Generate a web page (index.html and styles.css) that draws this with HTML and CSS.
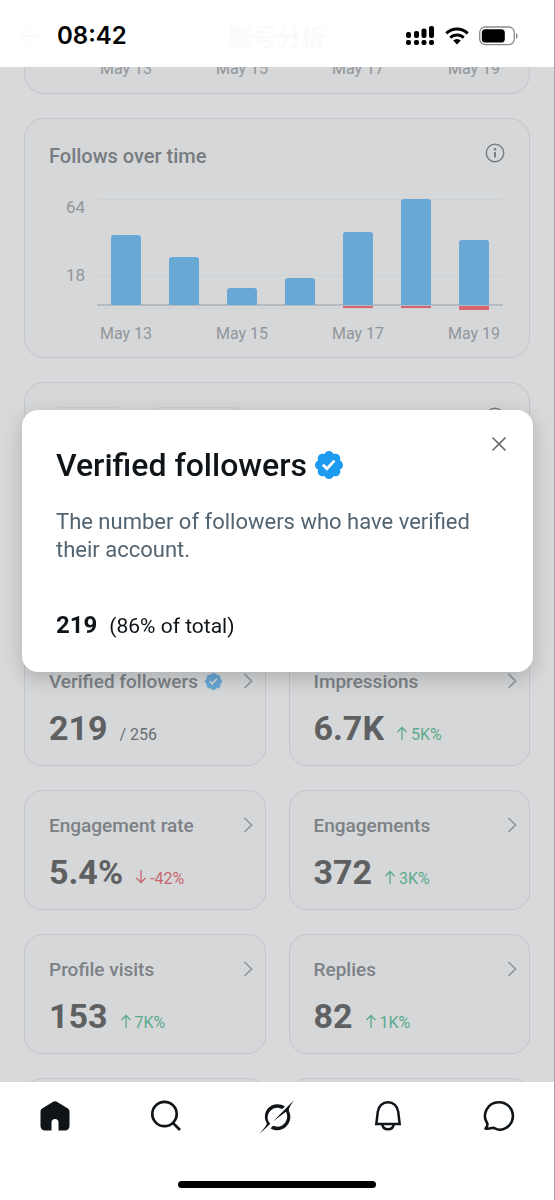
FILE: index.html
```html
<!DOCTYPE html>
<html lang="en">
<head>
<meta charset="utf-8">
<meta name="viewport" content="width=device-width, initial-scale=1">
<title>Account analytics</title>
<link rel="stylesheet" href="styles.css">
</head>
<body>
<svg class="defs" aria-hidden="true">
  <symbol id="verified" viewBox="1.75 1.75 20.5 20.5"><path fill="currentColor" d="M22.25 12c0-1.43-.88-2.67-2.19-3.34.46-1.39.2-2.9-.81-3.91s-2.52-1.27-3.91-.81c-.66-1.31-1.91-2.19-3.34-2.19s-2.67.88-3.33 2.19c-1.4-.46-2.91-.2-3.92.81s-1.26 2.52-.8 3.91c-1.31.67-2.2 1.91-2.2 3.34s.89 2.67 2.2 3.34c-.46 1.39-.21 2.9.8 3.91s2.52 1.26 3.91.81c.67 1.31 1.91 2.19 3.34 2.19s2.68-.88 3.34-2.19c1.39.45 2.9.2 3.91-.81s1.27-2.52.81-3.91c1.31-.67 2.19-1.91 2.19-3.34zm-11.71 4.2L6.8 12.46l1.41-1.42 2.26 2.26 4.8-5.23 1.47 1.36-6.2 6.77z"/></symbol>
  <symbol id="chevron" viewBox="0 0 10 16"><path d="M1.5 1l7 7-7 7" fill="none" stroke="currentColor" stroke-width="1.7"/></symbol>
  <symbol id="arrow-up" viewBox="0 0 12 14"><path d="M6 14V1.5M1.5 6L6 1.5 10.500 6" fill="none" stroke="currentColor" stroke-width="1.3"/></symbol>
  <symbol id="arrow-down" viewBox="0 0 12 14"><path d="M6 0v12.500M1.500 8L6 12.500 10.500 8" fill="none" stroke="currentColor" stroke-width="1.3"/></symbol>
  <symbol id="info" viewBox="0 0 20 20"><circle cx="10" cy="10" r="8.700" fill="none" stroke="currentColor" stroke-width="1.4"/><circle cx="10" cy="6.300" r="1.200" fill="currentColor"/><path d="M10 9v5.500" stroke="currentColor" stroke-width="1.900"/></symbol>
</svg>

<header class="topbar">
  <svg class="back" viewBox="0 0 20 18" aria-hidden="true"><path d="M20 9H2M9 2L2 9l7 7" fill="none" stroke="currentColor" stroke-width="2"/></svg>
  <time class="clock">08:42</time>
  <h1 class="page-title" lang="zh">账号分析</h1>
  <div class="indicators">
    <svg width="29" height="22" viewBox="0 0 29 22" aria-label="Signal">
      <g fill="#000"><rect x="0" y="7" width="5" height="6" rx="2"/><rect x="8" y="6" width="5" height="7" rx="2"/><rect x="15.500" y="3.500" width="5" height="9.500" rx="2"/><rect x="23" y="1" width="5" height="12" rx="2"/><rect x="0" y="15" width="5" height="5" rx="2"/><rect x="8" y="15" width="5" height="5" rx="2"/><rect x="15.500" y="15" width="5" height="5" rx="2"/><rect x="23" y="15" width="5" height="5" rx="2"/></g>
    </svg>
    <svg width="24" height="18" viewBox="0 0 24 18" aria-label="Wi-Fi">
      <g fill="none" stroke="#000" stroke-width="3"><path d="M1.300 6.400a15.300 15.300 0 0 1 21.400 0"/><path d="M5.300 10.800a9.600 9.600 0 0 1 13.400 0"/></g>
      <path d="M8.200 13.600a5.500 5.500 0 0 1 7.600 0L12 17.500z" fill="#000"/>
    </svg>
    <svg width="39" height="20" viewBox="0 0 39 20" aria-label="Battery">
      <rect x=".7" y="1" width="34.600" height="17.600" rx="5.500" fill="none" stroke="#8c8c8c" stroke-width="1.300"/><rect x="2.800" y="3.200" width="23" height="13.300" rx="3.500" fill="#000"/><path d="M37 7c2.200 1 2.200 4.800 0 5.800z" fill="#8c8c8c"/>
    </svg>
  </div>
</header>

<main class="feed">
  <section class="card previous">
    <div class="dates"><span>May 13</span><span></span><span>May 15</span><span></span><span>May 17</span><span></span><span>May 19</span></div>
  </section>

  <section class="card chart-card">
    <div class="card-head">
      <h2>Follows over time</h2>
      <button class="icon-button" aria-label="About follows over time"><svg class="info"><use href="#info"/></svg></button>
    </div>
    <div class="chart">
      <div class="scale"><span class="high">64</span><span>18</span></div>
      <div class="plot">
        <div class="bars">
          <i style="height:70px"></i><i style="height:48px"></i><i style="height:17px"></i><i style="height:27px"></i><i style="height:73px"></i><i style="height:106px"></i><i style="height:65px"></i>
        </div>
        <div class="losses">
          <i style="height:0"></i><i style="height:0"></i><i style="height:0"></i><i style="height:0"></i><i style="height:2px"></i><i style="height:2px"></i><i style="height:4px"></i>
        </div>
      </div>
    </div>
    <div class="dates"><span>May 13</span><span></span><span>May 15</span><span></span><span>May 17</span><span></span><span>May 19</span></div>
  </section>

  <section class="card range-card">
    <div class="chips"><span class="chip short"></span><span class="chip"></span></div>
    <button class="icon-button" aria-label="About this range"><svg class="info"><use href="#info"/></svg></button>
  </section>

  <div class="metrics">
    <button class="card metric">
      <span class="metric-head">Verified followers <svg class="badge"><use href="#verified"/></svg><svg class="chevron"><use href="#chevron"/></svg></span>
      <span class="metric-body"><strong>219</strong><span class="delta">/ 256</span></span>
    </button>
    <button class="card metric">
      <span class="metric-head">Impressions<svg class="chevron"><use href="#chevron"/></svg></span>
      <span class="metric-body"><strong>6.7K</strong><span class="delta up"><svg><use href="#arrow-up"/></svg>5K%</span></span>
    </button>
    <button class="card metric">
      <span class="metric-head">Engagement rate<svg class="chevron"><use href="#chevron"/></svg></span>
      <span class="metric-body"><strong>5.4%</strong><span class="delta down"><svg><use href="#arrow-down"/></svg>-42%</span></span>
    </button>
    <button class="card metric">
      <span class="metric-head">Engagements<svg class="chevron"><use href="#chevron"/></svg></span>
      <span class="metric-body"><strong>372</strong><span class="delta up"><svg><use href="#arrow-up"/></svg>3K%</span></span>
    </button>
    <button class="card metric">
      <span class="metric-head">Profile visits<svg class="chevron"><use href="#chevron"/></svg></span>
      <span class="metric-body"><strong>153</strong><span class="delta up"><svg><use href="#arrow-up"/></svg>7K%</span></span>
    </button>
    <button class="card metric">
      <span class="metric-head">Replies<svg class="chevron"><use href="#chevron"/></svg></span>
      <span class="metric-body"><strong>82</strong><span class="delta up"><svg><use href="#arrow-up"/></svg>1K%</span></span>
    </button>
    <div class="card metric"></div>
    <div class="card metric"></div>
  </div>
</main>

<footer class="dock">
  <nav class="tabs">
    <a href="#home" aria-label="Home"><svg viewBox="0 0 32 32"><path fill="#0f1419" d="M13.800 1.900a4 4 0 0 1 4.400 0l10.300 6.400c1.300.8 2 2 2 3.500V26a4.500 4.500 0 0 1-4.500 4.500h-6.500v-8a3.500 3.500 0 0 0-7 0v8H6A4.500 4.500 0 0 1 1.500 26V11.800c0-1.500.7-2.700 2-3.500z"/></svg></a>
    <a href="#search" aria-label="Search"><svg viewBox="0 0 32 32"><g fill="none" stroke="#0f1419" stroke-width="2.700"><circle cx="14.500" cy="14" r="12.200"/><path d="M23 23l7 7"/></g></svg></a>
    <a href="#grok" aria-label="Grok"><svg class="grok" viewBox="0 0 106 104"><path fill="#0f1419" d="M79 20C61 8 36 12 24 29c-9 14-8 29-1 41 2 6-8 15-21 33l32-30C22 60 24 42 36 31c10-9 24-10 34-3z"/><path fill="#0f1419" d="M106 1L43 65l39-29c8 16 2 34-12 42-10 5-20 4-28 1l-7 8c15 9 35 7 47-5 14-13 17-32 9-48-2-7 5-17 15-33z"/></svg></a>
    <a href="#notifications" aria-label="Notifications"><svg viewBox="0 0 32 32"><g fill="none" stroke="#0f1419" stroke-width="2.500"><path d="M4.300 24l1.500-12.400C6.400 6 10.700 2.300 16 2.300S25.600 6 26.200 11.600L27.700 24z"/><path d="M10.300 24.500c.9 6.400 10.500 6.400 11.400 0"/></g></svg></a>
    <a href="#messages" aria-label="Messages"><svg viewBox="0 0 32 32"><path fill="none" stroke="#0f1419" stroke-width="2.600" stroke-linejoin="round" d="M16 2.200A13.700 13.700 0 1 1 16.300 29.700c-2.500 0-4.200-1.400-5.800-2-1.700.1-4.300 1.700-8 .9 1.700-1.800 2.300-3.300 1.800-5.100A13.700 13.700 0 0 1 16 2.200z"/></svg></a>
  </nav>
  <div class="home-indicator"></div>
</footer>

<div class="overlay">
  <section class="dialog" role="dialog" aria-labelledby="dialog-title">
    <button class="close" aria-label="Close"><svg viewBox="0 0 16 16"><path d="M1.500 1.500l13 13M14.500 1.500l-13 13" stroke="currentColor" stroke-width="1.700"/></svg></button>
    <h2 id="dialog-title">Verified followers <svg><use href="#verified"/></svg></h2>
    <p class="description">The number of followers who have verified their account.</p>
    <p class="total"><strong>219</strong><span>(86% of total)</span></p>
  </section>
</div>
</body>
</html>
```
FILE: styles.css
```css
* { box-sizing: border-box; }

body {
  margin: 0;
  height: 100vh;
  display: flex;
  flex-direction: column;
  overflow: hidden;
  border-right: 1px solid #a3a3a5;
  background: #d9d9db;
  color: #0f1419;
  font-family: Roboto, "Liberation Sans", sans-serif;
}

h1, h2, p { margin: 0; font-weight: 500; }
button { border: 0; padding: 0; background: none; font: inherit; color: inherit; text-align: left; }
svg { display: block; flex: none; }
.defs { position: absolute; width: 0; height: 0; }

/* Top bar */
.topbar {
  flex: none;
  height: 67px;
  padding: 6px 18px 0;
  display: grid;
  grid-template-columns: 1fr auto 1fr;
  grid-template-rows: 60px;
  align-items: center;
  background: #fff;
}
.back { grid-area: 1 / 1; width: 20px; height: 18px; color: #fafafa; }
.clock {
  grid-area: 1 / 1;
  padding-left: 39px;
  color: #000;
  font: 600 24px/30px Inter, "Liberation Sans", sans-serif;
}
.page-title { color: #fafafa; font: 700 24px/30px "Noto Sans CJK SC", sans-serif; }
.indicators { display: flex; align-items: center; justify-content: flex-end; gap: 10px; padding-right: 18px; }

/* Feed */
.feed {
  flex: 1;
  min-height: 0;
  overflow: hidden;
  padding: 0 24px;
  display: flex;
  flex-direction: column;
  gap: 24px;
}
.card {
  flex: none;
  border: 1px solid #c3c6c9;
  border-radius: 20px;
  background: #d5d7d9;
}
.previous {
  margin-top: -20px;
  height: 47px;
  padding: 12px 26px 0 72px;
  border-top: 0;
}
.dates {
  display: grid;
  grid-template-columns: repeat(7, 1fr);
  justify-items: center;
  color: #929699;
  font-size: 16px;
  line-height: 20px;
  white-space: nowrap;
}
.dates span { width: 0; display: flex; justify-content: center; }

.chart-card { height: 240px; padding: 24px 26px 0 24px; }
.card-head { display: flex; justify-content: space-between; height: 56px; margin-right: -2px; }
.card-head h2 { color: #777c81; font-size: 20px; line-height: 26px; }
.icon-button { width: 20px; height: 20px; color: #777c81; }
.info { width: 20px; height: 20px; }
.chart { display: flex; gap: 12px; }
.scale {
  width: 36px;
  color: #929699;
  font-size: 17px;
  line-height: 16px;
  text-align: right;
}
.scale span { display: block; }
.scale .high { margin-bottom: 52px; }
.plot { flex: 1; border-bottom: 1px solid #ced1d3; height: 110px; }
.bars, .losses { display: grid; grid-template-columns: repeat(7, 1fr); justify-items: center; }
.bars {
  height: 107px;
  align-items: end;
  border-bottom: 2px solid #b4bac0;
  background: linear-gradient(#ced1d3, #ced1d3) 0 0 / 100% 1px no-repeat, linear-gradient(#ced1d3, #ced1d3) 0 76px / 100% 1px no-repeat;
}
.bars i { width: 30px; border-radius: 3px 3px 0 0; background: #69a8d5; }
.losses i { width: 30px; background: #d56774; }
.chart-card .dates { margin: 15px 0 0 48px; }

.range-card { height: 240px; padding: 24px; display: flex; justify-content: space-between; }
.chips { display: flex; gap: 22px; }
.chip { width: 96px; height: 36px; border: 1px solid #caccce; border-radius: 12px; }
.chip.short { width: 78px; }

.metrics { display: grid; grid-template-columns: 1fr 1fr; gap: 24px 23px; }
.metric {
  height: 120px;
  padding: 20px 12px 0 24px;
  border-radius: 18px;
  display: flex;
  flex-direction: column;
  align-items: stretch;
  justify-content: flex-start;
}
.metric-head {
  display: flex;
  align-items: center;
  gap: 7px;
  height: 28px;
  color: #7c8186;
  font-size: 19px;
  font-weight: 500;
}
.badge { width: 17px; height: 17px; color: #69a8d5; }
.chevron { width: 10px; height: 16px; margin-left: auto; color: #92999e; }
.metric-body { display: flex; align-items: baseline; gap: 12px; padding-top: 13px; color: #5e6062; }
.metric-body strong { font-size: 34px; line-height: 40px; font-weight: 700; }
.delta { display: flex; align-items: baseline; gap: 3px; font-size: 16px; color: #6b6e70; }
.delta svg { width: 12px; height: 14px; }
.delta.up { color: #5aaa8b; }
.delta.down { color: #c8656c; }

/* Bottom navigation */
.dock { flex: none; height: 118px; background: #fff; }
.tabs { display: grid; grid-template-columns: repeat(5, 1fr); padding-top: 18px; height: 99px; }
.tabs a { display: flex; justify-content: center; height: 34px; }
.tabs svg { width: 32px; height: 32px; }
.tabs .grok { width: 35px; height: 34px; }
.home-indicator { width: 198px; height: 7px; margin: 0 auto; border-radius: 4px; background: #000; }

/* Dialog */
.overlay {
  position: fixed;
  inset: 0 0 118px;
  padding: 0 22px;
  display: flex;
  align-items: center;
}
.dialog {
  position: relative;
  flex: 1;
  padding: 35px 34px 32px;
  border-radius: 16px;
  background: #fff;
  box-shadow: 0 6px 20px rgba(0, 0, 0, .2);
}
.dialog h2 { display: flex; align-items: center; gap: 8px; font-size: 32px; line-height: 40px; }
.dialog h2 svg { width: 28px; height: 28px; color: #1d9bf0; }
.description { margin-top: 23px; padding-right: 20px; color: #536471; font-size: 22px; line-height: 28px; font-weight: 400; }
.total { margin-top: 47px; display: flex; align-items: baseline; gap: 12px; line-height: 28px; font-size: 21px; font-weight: 400; }
.total strong { font-size: 24px; font-weight: 700; }
.close { position: absolute; top: 26px; right: 26px; width: 16px; height: 16px; color: #6b6e70; }
```
